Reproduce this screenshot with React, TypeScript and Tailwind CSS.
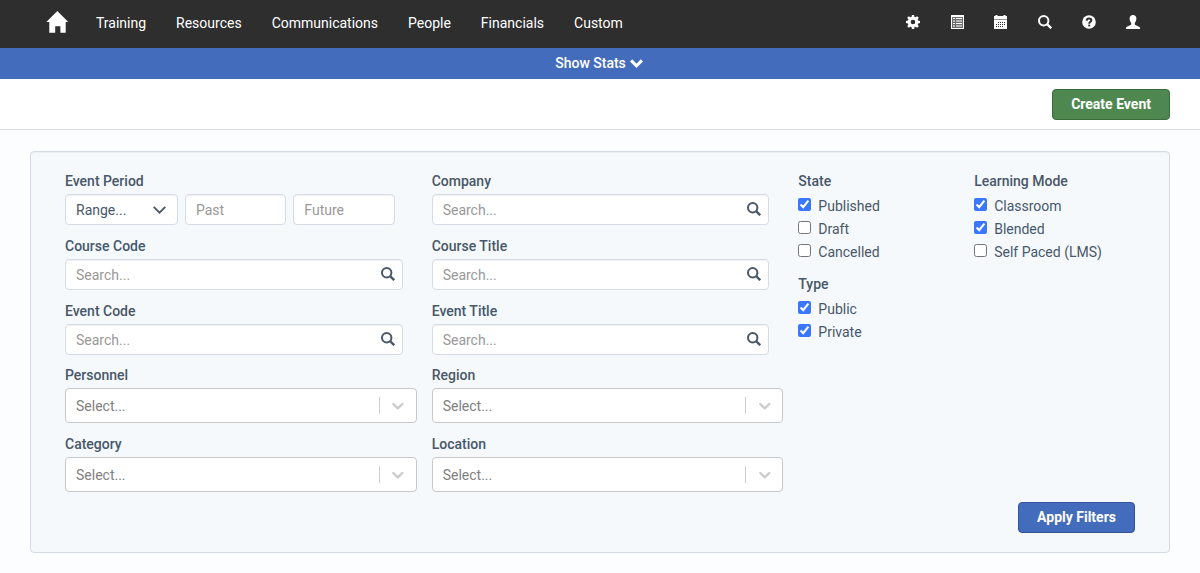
import { useId } from "react";
import type { ReactNode } from "react";

function HomeIcon() {
  return (
    <svg width="22" height="22" viewBox="0 0 22 22" fill="currentColor" aria-hidden="true">
      <path d="M11.300 0 22.300 11h-2.600V21.700h-5.300v-6.500H9.200v6.500H3.300V11H.3z" />
    </svg>
  );
}

function CogIcon() {
  return (
    <svg width="14" height="14" viewBox="0 0 14 14" fill="currentColor" fillRule="evenodd" aria-hidden="true">
      <path d="M5.900 0h2.200l.4 1.900 1.100.45 1.600-1.100 1.550 1.550-1.100 1.600.45 1.100 1.900.4v2.200l-1.900.4-.45 1.100 1.100 1.600-1.550 1.550-1.600-1.100-1.100.45-.4 1.900H5.900l-.4-1.900-1.100-.45-1.600 1.100L1.250 11.200l1.100-1.600-.45-1.100L0 8.100V5.900l1.900-.4.45-1.100-1.100-1.600L2.800 1.250l1.600 1.100 1.100-.45zM7 4.700a2.300 2.300 0 1 0 0 4.600 2.300 2.300 0 0 0 0-4.600z" />
    </svg>
  );
}

function ListIcon() {
  return (
    <svg width="14" height="14" viewBox="0 0 14 14" fill="currentColor" aria-hidden="true">
      <path fillRule="evenodd" d="M1 0h13v14H1zM2 2v11h11V2z" />
      <path opacity=".3" d="M2 2h11v11H2z" />
      <path d="M3 3h2v1H3zM6 3h6v1H6zM3 5.500h2v1H3zM6 5.500h6v1H6zM3 8h2v1H3zM6 8h6v1H6zM3 10.500h2v1H3zM6 10.500h6v1H6z" />
    </svg>
  );
}

function CalendarIcon() {
  return (
    <svg width="13" height="14" viewBox="0 0 13 14" fill="currentColor" aria-hidden="true">
      <path d="M1.500 0h2v1h6V0h2v1H13v3H0V1h1.500z" />
      <path opacity=".5" d="M0 4h13v1H0z" />
      <path fillRule="evenodd" d="M0 5h13v9H0zM4 7v1h1V7zM6 7v1h1V7zM8 7v1h1V7zM10 7v1h1V7zM2 9v1h1V9zM4 9v1h1V9zM6 9v1h1V9zM8 9v1h1V9zM10 9v1h1V9zM2 11v1h1v-1zM4 11v1h1v-1zM6 11v1h1v-1zM8 11v1h1v-1z" />
    </svg>
  );
}

function SearchIcon() {
  return (
    <svg width="14" height="14" viewBox="0 0 14 14" fill="none" stroke="currentColor" aria-hidden="true">
      <circle cx="5.700" cy="5.700" r="4.700" strokeWidth="2" />
      <path d="m9 9 4.200 4.200" strokeWidth="2.400" />
    </svg>
  );
}

function HelpIcon() {
  return (
    <svg width="14" height="14" viewBox="0 0 14 14" aria-hidden="true">
      <circle cx="7" cy="7" r="6.800" fill="currentColor" />
      <path d="M4.700 5.600C4.800 4 5.900 3.500 7 3.500s2.400.5 2.400 1.800C9.400 6.800 7.200 6.800 7.200 8.700" fill="none" stroke="#2e2e2e" strokeWidth="2" />
      <path d="M6.200 9.600h2v1.800h-2z" fill="#2e2e2e" />
    </svg>
  );
}

function UserIcon() {
  return (
    <svg width="14" height="14" viewBox="0 0 14 14" fill="currentColor" aria-hidden="true">
      <path d="M7 0c2 0 3.400 1.300 3.400 3.500 0 1.900-.7 3.500-1.600 4.300v1.400c0 .5.200.7.600.9l3.600 1.600c.7.300 1 .7 1 1.400v.9H0v-.9c0-.7.3-1.100 1-1.400l3.600-1.600c.4-.2.600-.4.600-.9V7.800C4.300 7 3.600 5.400 3.600 3.500 3.600 1.300 5 0 7 0z" />
    </svg>
  );
}

const navLinks = ["Training", "Resources", "Communications", "People", "Financials", "Custom"];

const tools: { label: string; icon: ReactNode }[] = [
  { label: "Settings", icon: <CogIcon /> },
  { label: "Lists", icon: <ListIcon /> },
  { label: "Calendar", icon: <CalendarIcon /> },
  { label: "Search", icon: <SearchIcon /> },
  { label: "Help", icon: <HelpIcon /> },
  { label: "Account", icon: <UserIcon /> },
];

const boxClass =
  "h-[31px] w-full rounded-[4px] border border-[#d5dce6] bg-white px-2.5 text-[#485769] placeholder:text-[#999999] shadow-[inset_0_1px_1px_rgba(0,0,0,0.06)] outline-none focus:border-[#446cbc]";

function SearchField({ label }: { label: string }) {
  const id = useId();
  return (
    <div className="-mr-px flex flex-col gap-[3px]">
      <label htmlFor={id} className="font-medium">{label}</label>
      <div className="relative">
        <input id={id} type="text" placeholder="Search..." className={boxClass} />
        <button type="button" aria-label={`Search ${label}`} className="absolute top-0 right-2 flex h-[29px] items-center">
          <SearchIcon />
        </button>
      </div>
    </div>
  );
}

function SelectField({ label }: { label: string }) {
  const id = useId();
  return (
    <div className="-mr-[15px] flex flex-col gap-[3px]">
      <label htmlFor={id} className="font-medium">{label}</label>
      <div className="relative">
        <select id={id} className="h-[35px] w-full appearance-none rounded-[4px] border border-[#c8c8c8] bg-white px-2.5 text-[#808080] outline-none">
          <option>Select...</option>
        </select>
        <span className="pointer-events-none absolute inset-y-0 right-0 flex w-[38px] items-center">
          <span className="h-[17px] w-px bg-[#cccccc]" />
          <svg className="mx-auto" width="12" height="8" viewBox="0 0 12 8" fill="none" stroke="#cccccc" strokeWidth="2.400" strokeLinecap="round" strokeLinejoin="round" aria-hidden="true">
            <path d="m1.300 2 4.500 4.300L10.300 2" />
          </svg>
        </span>
      </div>
    </div>
  );
}

function PeriodField() {
  return (
    <div className="flex flex-col gap-[3px]">
      <label htmlFor="period" className="font-medium">Event Period</label>
      <div className="mr-[7px] flex gap-[7px]">
        <div className="relative w-[113px] shrink-0">
          <select id="period" className={`${boxClass} appearance-none`}>
            <option>Range...</option>
          </select>
          <svg className="pointer-events-none absolute top-3 right-3" width="13" height="8" viewBox="0 0 13 8" fill="none" stroke="#485769" strokeWidth="1.800" aria-hidden="true">
            <path d="m.7.8 5.800 5.900L12.300.8" />
          </svg>
        </div>
        <input type="text" aria-label="Past" placeholder="Past" className={`${boxClass} min-w-0 flex-1`} />
        <input type="text" aria-label="Future" placeholder="Future" className={`${boxClass} min-w-0 flex-1`} />
      </div>
    </div>
  );
}

function CheckGroup({ title, options }: { title: string; options: [string, boolean][] }) {
  return (
    <fieldset>
      <legend className="mb-[3px] font-medium">{title}</legend>
      {options.map(([name, on]) => (
        <label key={name} className="flex h-[23px] gap-[7px] leading-6">
          <input type="checkbox" defaultChecked={on} className="mt-1 size-[13px] accent-[#3b76ff]" />
          {name}
        </label>
      ))}
    </fieldset>
  );
}

export default function App() {
  return (
    <div className="min-h-screen bg-[#fcfdff] pb-5 font-['Roboto','Liberation_Sans',sans-serif] text-sm leading-5 text-[#485769]">
      <nav className="flex h-12 items-center bg-[#2e2e2e] pr-[60px] pl-[46px] text-white">
        <a href="#home" aria-label="Home" className="mr-[13px] -mt-1">
          <HomeIcon />
        </a>
        {navLinks.map((name) => (
          <a key={name} href={`#${name.toLowerCase()}`} className="px-[15px] pb-0.5">{name}</a>
        ))}
        <div className="ml-auto flex items-center gap-[30px] pb-1">
          {tools.map((tool) => (
            <button key={tool.label} type="button" aria-label={tool.label} className="flex w-3.5">
              {tool.icon}
            </button>
          ))}
        </div>
      </nav>
      <button type="button" className="flex h-[31px] w-full items-center justify-center gap-1 bg-[#446cbc] pr-0.5 pb-px font-medium text-white">
        Show Stats
        <svg width="13" height="9" viewBox="0 0 13 9" fill="none" stroke="currentColor" strokeWidth="3" aria-hidden="true">
          <path d="m1.100 1.400 5.400 5.400 5.400-5.400" />
        </svg>
      </button>
      <header className="flex justify-end border-b border-[#d5dce6] bg-white px-[30px] pt-2.5 pb-[9px]">
        <button type="button" className="h-[31px] rounded-[4px] border border-[#396a3b] bg-[#4e874f] px-[18px] pb-px font-bold text-white">
          Create Event
        </button>
      </header>
      <main className="mx-[30px] mt-[21px] rounded-[4px] border border-[#d5dce6] bg-[#f5f9fc] px-[34px] py-[19px] shadow-[inset_0_1px_1px_rgba(0,0,0,0.05)]">
        <form onSubmit={(event) => event.preventDefault()}>
          <div className="grid grid-cols-3 gap-[30px]">
            <div>
              <div className="mb-2.5 flex flex-col gap-[11px]">
                <PeriodField />
                <SearchField label="Course Code" />
                <SearchField label="Event Code" />
              </div>
              <div className="flex flex-col gap-[11px]">
                <SelectField label="Personnel" />
                <SelectField label="Category" />
              </div>
            </div>
            <div>
              <div className="mb-2.5 flex flex-col gap-[11px]">
                <SearchField label="Company" />
                <SearchField label="Course Title" />
                <SearchField label="Event Title" />
              </div>
              <div className="flex flex-col gap-[11px]">
                <SelectField label="Region" />
                <SelectField label="Location" />
              </div>
            </div>
            <div className="-mr-[15px] grid grid-cols-2 content-start">
              <div className="flex flex-col gap-[11px]">
                <CheckGroup title="State" options={[["Published", true], ["Draft", false], ["Cancelled", false]]} />
                <CheckGroup title="Type" options={[["Public", true], ["Private", true]]} />
              </div>
              <CheckGroup title="Learning Mode" options={[["Classroom", true], ["Blended", true], ["Self Paced (LMS)", false]]} />
            </div>
          </div>
          <div className="mt-2.5 flex justify-end">
            <button type="submit" className="h-[31px] rounded-[4px] border border-[#33549a] bg-[#446cbc] px-[18px] pb-px font-bold text-white">
              Apply Filters
            </button>
          </div>
        </form>
      </main>
    </div>
  );
}
